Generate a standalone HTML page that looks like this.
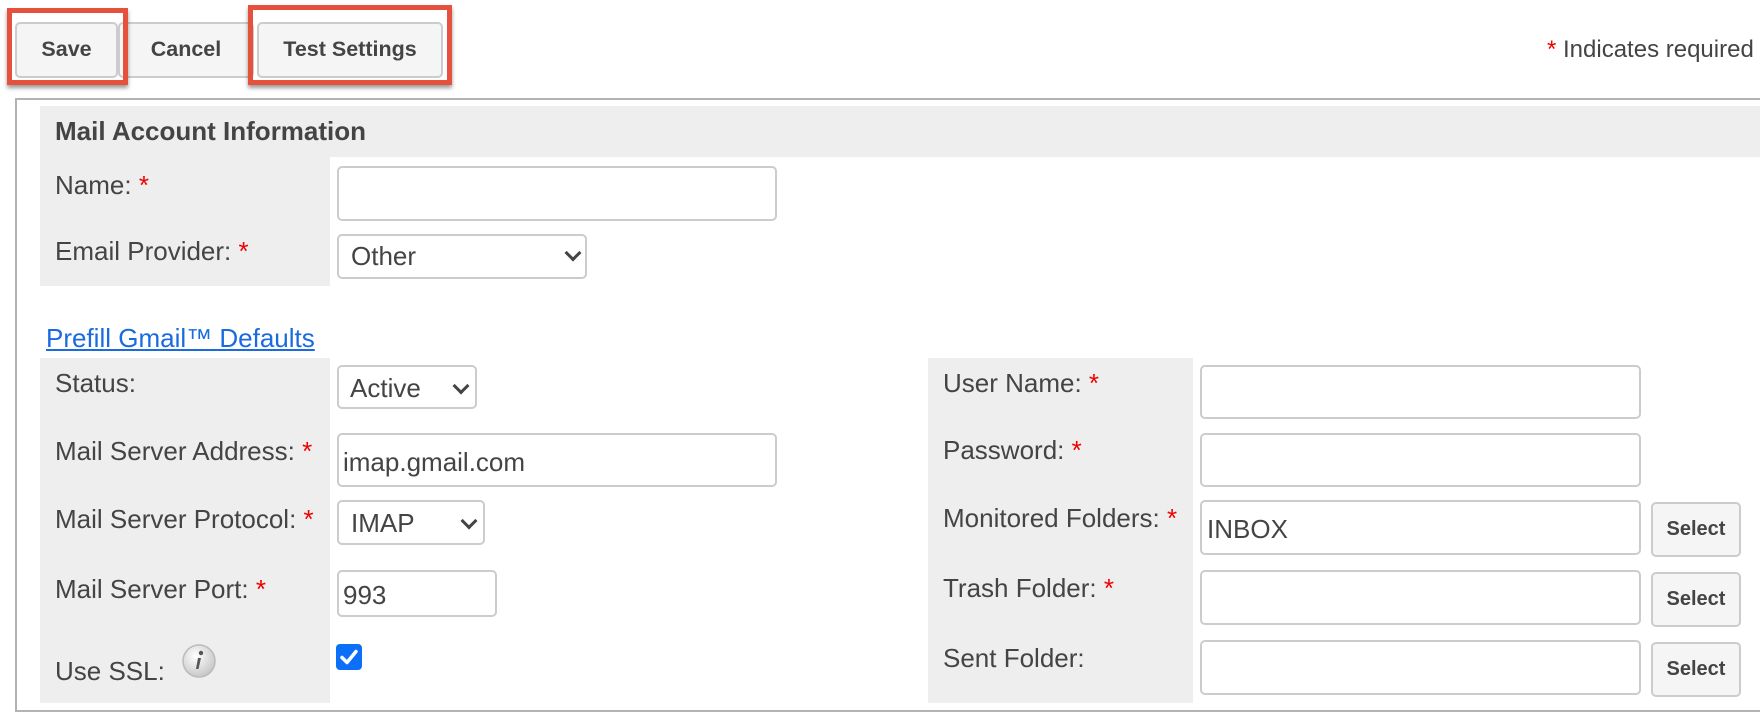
<!DOCTYPE html>
<html><head><meta charset="utf-8"><style>
body{margin:0;width:1760px;height:718px;overflow:hidden;background:#fff;font-family:"Liberation Sans",Arial,sans-serif;color:#444;position:relative}
.a{position:absolute}
.t{position:absolute;font-size:26px;line-height:24px;margin-top:-1px;white-space:nowrap;color:#444}
.r{color:#e00}
.g{position:absolute;background:#eee}
.in{position:absolute;box-sizing:border-box;border:2px solid #ccc;border-radius:5px;background:#fff}
.btn{position:absolute;box-sizing:border-box;border:2px solid #ccc;border-radius:5px;background:#f5f5f5;font-weight:bold;font-size:21.5px;color:#444;text-align:center}
.red{position:absolute;box-sizing:border-box;border:5px solid #e5513c;box-shadow:0 3px 4px rgba(0,0,0,.4)}
.chev{position:absolute;width:9px;height:9px;border-right:3px solid #444;border-bottom:3px solid #444;transform:rotate(45deg)}
</style></head><body>
<div class="btn" style="left:118px;top:22px;width:136px;height:56px;line-height:50px">Cancel</div>
<div class="btn" style="left:15px;top:22px;width:103px;height:56px;line-height:50px">Save</div>
<div class="red" style="left:7px;top:8px;width:121px;height:77px"></div>
<div class="btn" style="left:257px;top:22px;width:186px;height:56px;line-height:50px">Test Settings</div>
<div class="red" style="left:248px;top:5px;width:204px;height:80px"></div>
<div class="t" style="left:1547px;top:39px;font-size:24px"><span class="r">*</span> Indicates required</div>

<div class="a" style="left:15px;top:98px;width:1760px;height:610px;border:2px solid #b3b3b3;border-right:none"></div>
<div class="g" style="left:40px;top:106px;width:1720px;height:51px"></div>
<div class="g" style="left:40px;top:157px;width:290px;height:129px"></div>
<div class="t" style="left:55px;top:120px;font-weight:bold">Mail Account Information</div>

<div class="t" style="left:55px;top:174px">Name: <span class="r">*</span></div>
<div class="in" style="left:337px;top:166px;width:440px;height:55px"></div>
<div class="t" style="left:55px;top:240px">Email Provider: <span class="r">*</span></div>
<div class="in" style="left:337px;top:234px;width:250px;height:45px"></div>
<div class="t" style="left:351px;top:245px">Other</div>
<div class="chev" style="left:567px;top:247px"></div>

<div class="t" style="left:46px;top:327px;color:#1a6ae0;text-decoration:underline">Prefill Gmail™ Defaults</div>

<div class="g" style="left:40px;top:358px;width:290px;height:345px"></div>
<div class="t" style="left:55px;top:372px">Status:</div>
<div class="in" style="left:337px;top:365px;width:140px;height:44px"></div>
<div class="t" style="left:350px;top:377px">Active</div>
<div class="chev" style="left:455px;top:380px"></div>

<div class="t" style="left:55px;top:440px">Mail Server Address: <span class="r">*</span></div>
<div class="in" style="left:337px;top:433px;width:440px;height:54px"></div>
<div class="t" style="left:343px;top:451px">imap.gmail.com</div>

<div class="t" style="left:55px;top:508px">Mail Server Protocol: <span class="r">*</span></div>
<div class="in" style="left:337px;top:500px;width:148px;height:45px"></div>
<div class="t" style="left:351px;top:512px">IMAP</div>
<div class="chev" style="left:463px;top:515px"></div>

<div class="t" style="left:55px;top:578px">Mail Server Port: <span class="r">*</span></div>
<div class="in" style="left:337px;top:570px;width:160px;height:47px"></div>
<div class="t" style="left:343px;top:584px">993</div>

<div class="t" style="left:55px;top:660px">Use SSL:</div>
<svg class="a" style="left:181px;top:643px" width="36" height="36" viewBox="0 0 36 36"><defs><radialGradient id="gi" cx="40%" cy="35%" r="65%"><stop offset="0" stop-color="#fff"/><stop offset="1" stop-color="#c8c8c8"/></radialGradient></defs><circle cx="18" cy="18" r="16" fill="url(#gi)" stroke="#bbb" stroke-width="1.5"/><circle cx="20" cy="10" r="2.2" fill="#555"/><path d="M17 15 L20 15 L17.5 26 L15 26 Z" fill="#555"/></svg>
<svg class="a" style="left:336px;top:644px" width="26" height="26" viewBox="0 0 26 26"><rect width="26" height="26" rx="4" fill="#0b6ff7"/><path d="M6 13.5 L11 18.5 L20 7.5" fill="none" stroke="#fff" stroke-width="3.5" stroke-linecap="round" stroke-linejoin="round"/></svg>

<div class="g" style="left:928px;top:358px;width:265px;height:345px"></div>
<div class="t" style="left:943px;top:372px">User Name: <span class="r">*</span></div>
<div class="in" style="left:1200px;top:365px;width:441px;height:54px"></div>
<div class="t" style="left:943px;top:439px">Password: <span class="r">*</span></div>
<div class="in" style="left:1200px;top:433px;width:441px;height:54px"></div>
<div class="t" style="left:943px;top:507px">Monitored Folders: <span class="r">*</span></div>
<div class="in" style="left:1200px;top:500px;width:441px;height:55px"></div>
<div class="t" style="left:1207px;top:518px">INBOX</div>
<div class="btn" style="left:1651px;top:502px;width:90px;height:55px;line-height:51px;font-size:20px">Select</div>
<div class="t" style="left:943px;top:577px">Trash Folder: <span class="r">*</span></div>
<div class="in" style="left:1200px;top:570px;width:441px;height:55px"></div>
<div class="btn" style="left:1651px;top:572px;width:90px;height:55px;line-height:51px;font-size:20px">Select</div>
<div class="t" style="left:943px;top:647px">Sent Folder:</div>
<div class="in" style="left:1200px;top:640px;width:441px;height:55px"></div>
<div class="btn" style="left:1651px;top:642px;width:90px;height:55px;line-height:51px;font-size:20px">Select</div>
</body></html>
